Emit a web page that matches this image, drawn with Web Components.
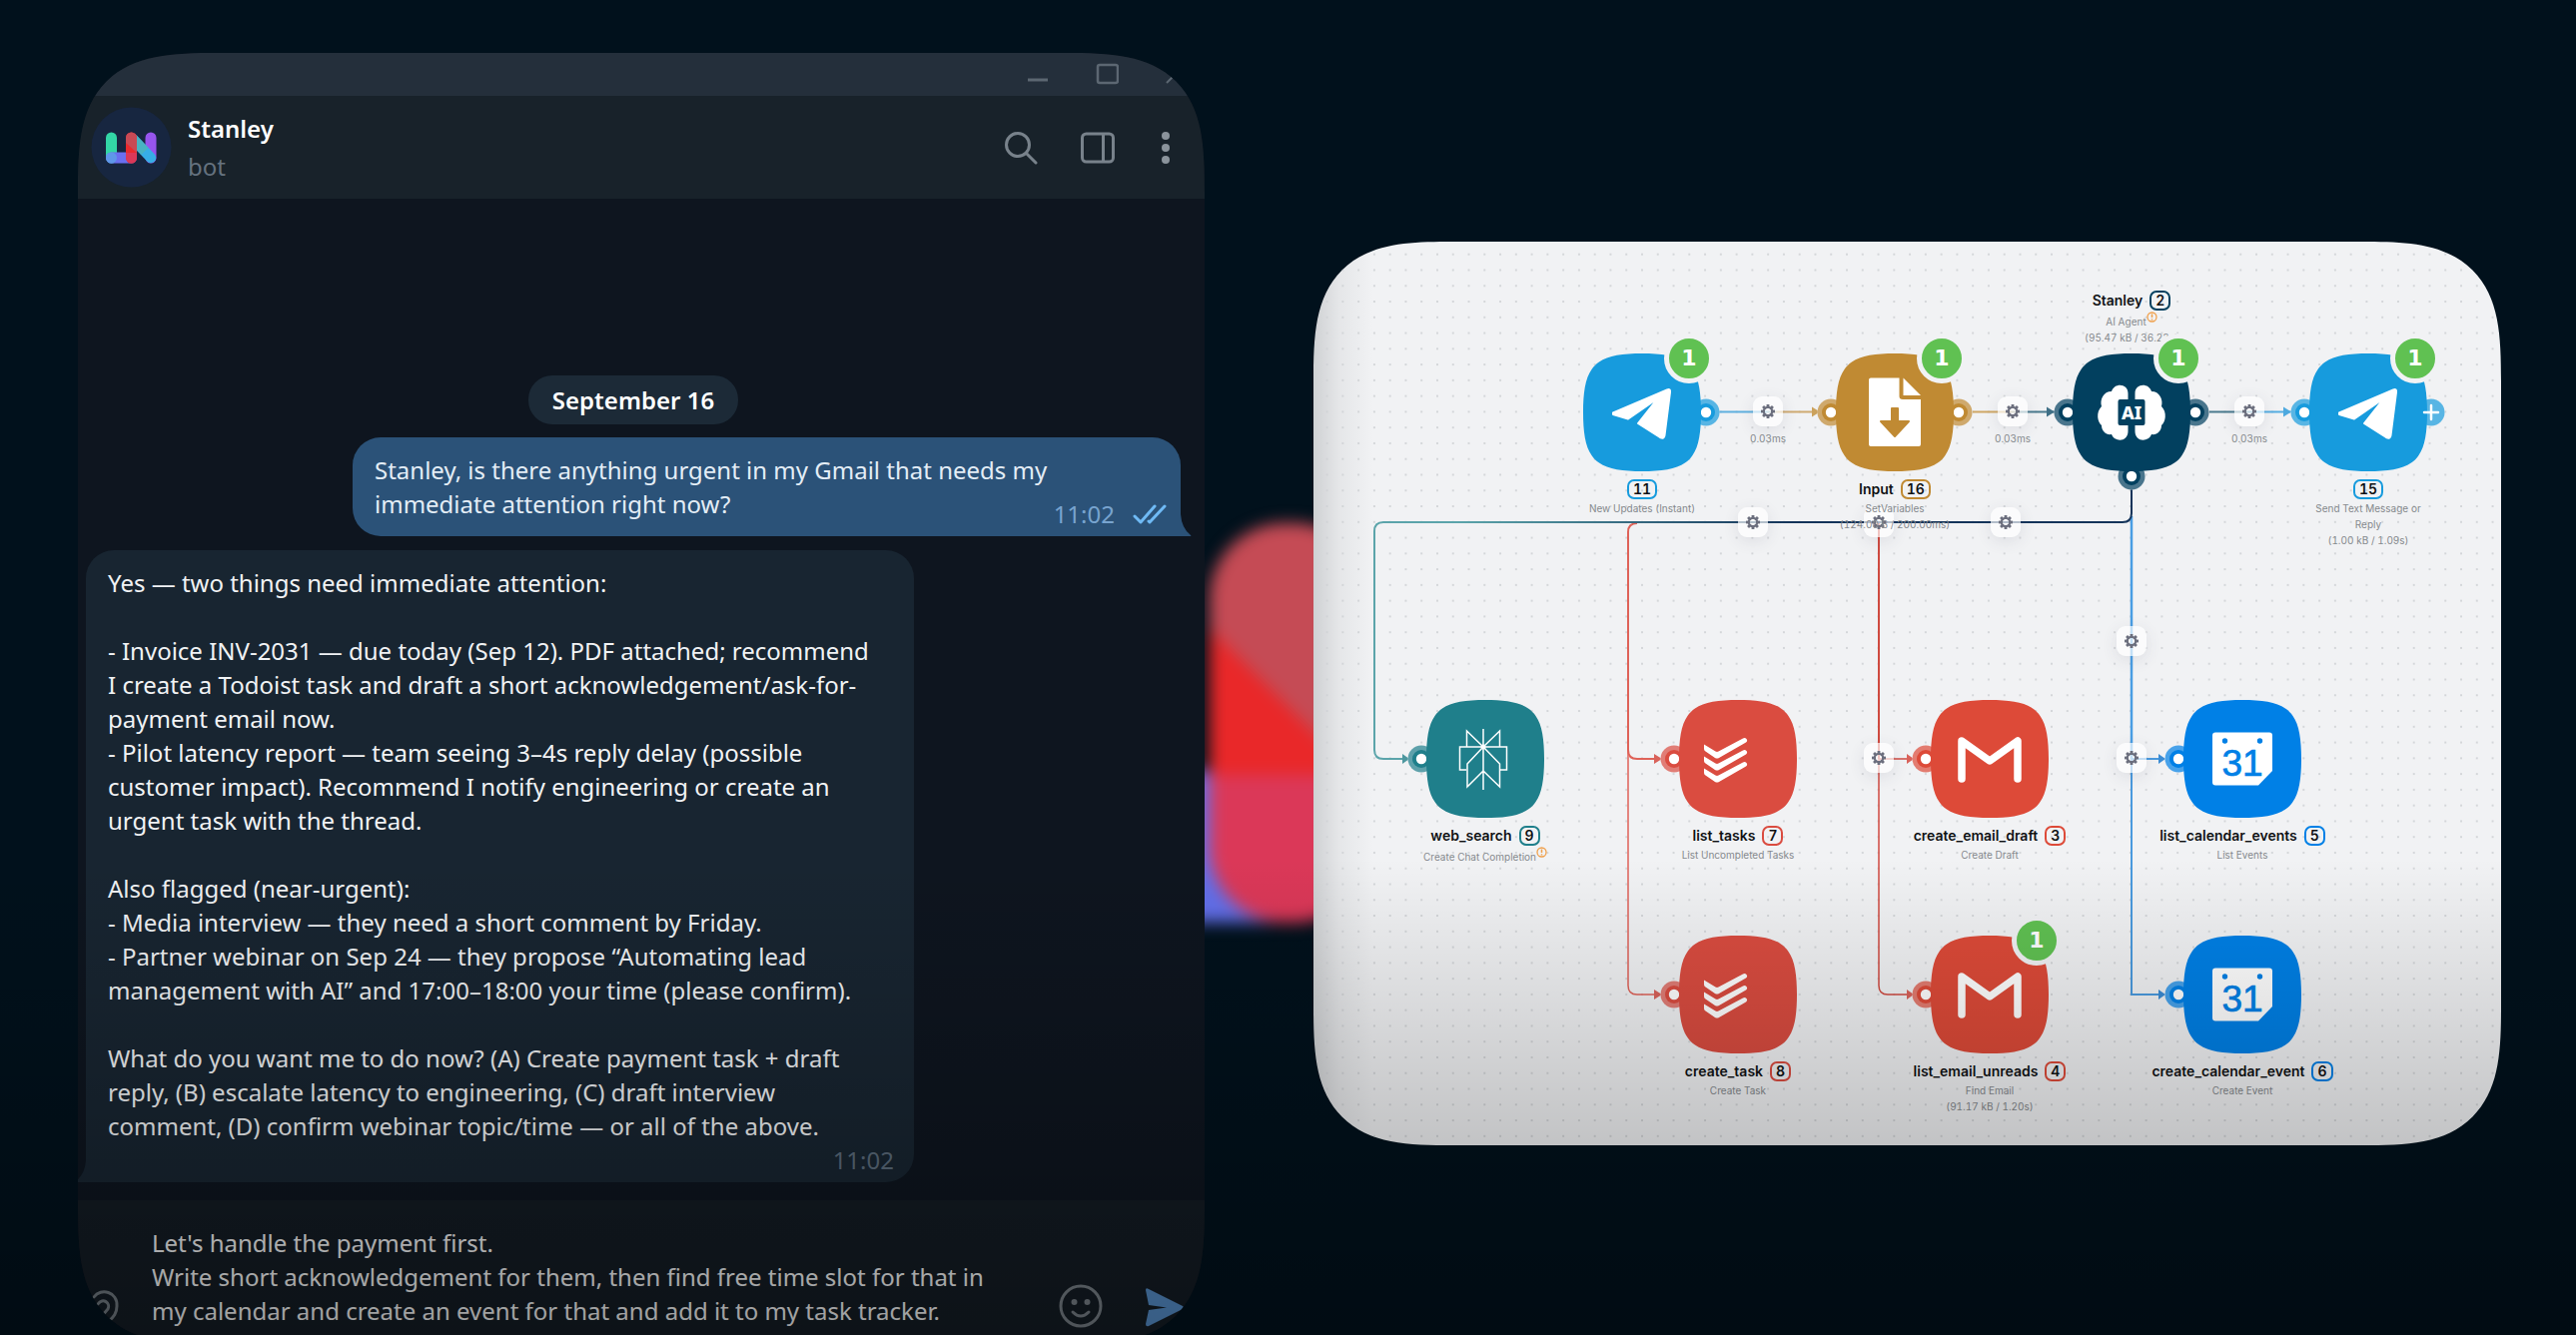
<!DOCTYPE html>
<html lang="en">
<head>
<meta charset="utf-8">
<title>Stanley</title>
<style>
  html, body { height: 100%; }
  body { margin: 0; overflow: hidden; background: #01111c; }
</style>
</head>
<body>
<assistant-stage>
  <chat-window slot="chat">
    <chat-header slot="header" name="Stanley" status="bot"></chat-header>
    <date-pill>September 16</date-pill>
    <chat-message kind="out" time="11:02">Stanley, is there anything urgent in my Gmail that needs my
immediate attention right now?</chat-message>
    <chat-message kind="in" time="11:02">Yes — two things need immediate attention:

- Invoice INV-2031 — due today (Sep 12). PDF attached; recommend
I create a Todoist task and draft a short acknowledgement/ask-for-
payment email now.
- Pilot latency report — team seeing 3–4s reply delay (possible
customer impact). Recommend I notify engineering or create an
urgent task with the thread.

Also flagged (near-urgent):
- Media interview — they need a short comment by Friday.
- Partner webinar on Sep 24 — they propose “Automating lead
management with AI” and 17:00–18:00 your time (please confirm).

What do you want me to do now? (A) Create payment task + draft
reply, (B) escalate latency to engineering, (C) draft interview
comment, (D) confirm webinar topic/time — or all of the above.</chat-message>
    <chat-composer slot="composer"></chat-composer>
  </chat-window>
  <flow-canvas slot="flow">
    <flow-gear x="455" y="170" time="0.03ms"></flow-gear>
    <flow-gear x="700" y="170" time="0.03ms"></flow-gear>
    <flow-gear x="937" y="170" time="0.03ms"></flow-gear>
    <flow-gear x="440" y="281"></flow-gear>
    <flow-gear x="566" y="281"></flow-gear>
    <flow-gear x="693" y="281"></flow-gear>
    <flow-gear x="819" y="400"></flow-gear>
    <flow-gear x="566" y="517"></flow-gear>
    <flow-gear x="819" y="517"></flow-gear>
    <flow-node x="329" y="171" icon="telegram" color="#179bdd" number="11" ports="right" badge="1"><span>New Updates (Instant)</span></flow-node>
    <flow-node x="582" y="171" icon="document" color="#c08a33" number="16" name="Input" ports="left right" badge="1"><span>SetVariables</span><span>(124.00 B / 200.00ms)</span></flow-node>
    <flow-node x="819" y="171" icon="brain" color="#02405f" number="2" name="Stanley" ports="left right bottom" badge="1" label="top"><span>AI Agent<warn-mark></warn-mark></span><span>(95.47 kB / 36.22s)</span></flow-node>
    <flow-node x="1056" y="171" icon="telegram" color="#179bdd" number="15" ports="left plus" badge="1"><span>Send Text Message or</span><span>Reply</span><span>(1.00 kB / 1.09s)</span></flow-node>
    <flow-node x="172" y="518" icon="perplexity" color="#1f7f8b" number="9" name="web_search" ports="left"><span>Create Chat Completion<warn-mark></warn-mark></span></flow-node>
    <flow-node x="425" y="518" icon="todoist" color="#da4c40" number="7" name="list_tasks" ports="left"><span>List Uncompleted Tasks</span></flow-node>
    <flow-node x="677" y="518" icon="gmail" color="#dd4a38" number="3" name="create_email_draft" ports="left"><span>Create Draft</span></flow-node>
    <flow-node x="930" y="518" icon="calendar" color="#0080e6" number="5" name="list_calendar_events" ports="left"><span>List Events</span></flow-node>
    <flow-node x="425" y="754" icon="todoist" color="#da4c40" number="8" name="create_task" ports="left"><span>Create Task</span></flow-node>
    <flow-node x="677" y="754" icon="gmail" color="#dd4a38" number="4" name="list_email_unreads" ports="left" badge="1"><span>Find Email</span><span>(91.17 kB / 1.20s)</span></flow-node>
    <flow-node x="930" y="754" icon="calendar" color="#0080e6" number="6" name="create_calendar_event" ports="left"><span>Create Event</span></flow-node>
  </flow-canvas>
</assistant-stage>

<script>
const define = (name, render) => customElements.define(name, class extends HTMLElement {
  connectedCallback() {
    if (this.shadowRoot) return;
    this.attachShadow({ mode: 'open' }).innerHTML = render(this);
  }
});

const SQUIRCLE = `border-radius: 104px;`;
const SQUIRCLE_SUPPORT = `@supports (corner-shape: superellipse(1.6)) {
  .panel { border-radius: 140px; corner-shape: superellipse(1.6); }
}`;

/* Whole stage: two panels over a dark backdrop with a blurred logo */
define('assistant-stage', () => `
<style>
  :host { display: grid; position: relative; box-sizing: border-box; height: 100vh; overflow: hidden;
    grid-template-columns: 1128fr 1189fr; column-gap: 109px; align-items: center; align-content: start;
    padding: 53px 75px 0 78px; background: #01111c;
    font-family: "Noto Sans", "Open Sans", sans-serif; }
  .glow { position: absolute; left: 1120px; top: 440px; width: 300px; height: 560px; filter: blur(8px); }
  .flow { margin-bottom: 10px; }
  .chat, .flow { position: relative; min-width: 0; }
  .shade { position: absolute; inset: 860px 0 0 0; pointer-events: none;
    background: linear-gradient(rgba(0,0,0,0), rgba(0,0,0,.32)); }
</style>
<svg class="glow" viewBox="1120 440 300 560" aria-hidden="true">
  <defs><clipPath id="bar"><rect x="1211" y="524" width="160" height="400" rx="76"/></clipPath></defs>
  <rect x="1000" y="772" width="330" height="152" rx="60" fill="#626fea"/>
  <g clip-path="url(#bar)">
    <rect x="1211" y="522" width="160" height="402" fill="#e92829"/>
    <path d="M1200 500H1372V790L1200 618Z" fill="#c54b55"/>
    <rect x="1211" y="776" width="160" height="150" fill="#db3858"/>
  </g>
</svg>
<div class="chat"><slot name="chat"></slot></div>
<div class="flow"><slot name="flow"></slot></div>
<div class="shade"></div>`);

define('chat-window', () => `
<style>
  :host { display: block; }
  .panel { display: grid; grid-template-rows: auto 1fr auto; overflow: hidden; background: #0e151f; ${SQUIRCLE} }
  ${SQUIRCLE_SUPPORT}
  main { display: flex; flex-direction: column; justify-content: flex-end; padding: 177px 24px 18px 8px; }
</style>
<section class="panel">
  <slot name="header"></slot>
  <main><slot></slot></main>
  <slot name="composer"></slot>
</section>`);

define('chat-header', el => `
<style>
  :host { display: block; }
  button { all: unset; display: block; }
  svg { display: block; }
  .titlebar { display: flex; justify-content: flex-end; align-items: center; gap: 46px; height: 43px; padding-right: 16px;
    box-sizing: border-box; background: #242f3b; }
  .bar { display: flex; align-items: center; height: 103px; padding: 0 30px 0 13px; background: #18222a; }
  .who { display: flex; flex-direction: column; flex: 1; margin-left: 16px; }
  .name { font-weight: 600; font-size: 24px; line-height: 38px; color: #fff; }
  .status { font-size: 24px; line-height: 38px; color: #65727f; }
  .tools { display: flex; align-items: center; gap: 42px; }
</style>
<div class="titlebar">
  <button aria-label="Minimize"><svg width="24" height="24" fill="none" stroke="#5c6772" stroke-width="3"><path d="M3 17H23"/></svg></button>
  <button aria-label="Maximize"><svg width="24" height="24" fill="none" stroke="#5c6772" stroke-width="2.500"><rect x="3" y="2" width="20" height="18" rx="2"/></svg></button>
  <button aria-label="Close"><svg width="24" height="24" fill="none" stroke="#5c6772" stroke-width="2"><path d="M2 20L20 2M2 2L20 20"/></svg></button>
</div>
<div class="bar">
  <svg width="81" height="81" viewBox="0 0 81 81" role="img" aria-label="Avatar">
    <circle cx="40.500" cy="40.500" r="40" fill="#172640"/>
    <rect x="15" y="25.500" width="11" height="31" rx="5.500" fill="#33d6a6"/>
    <rect x="15" y="45.500" width="31" height="11" rx="5.500" fill="#6a6ff0"/>
    <rect x="15" y="45.500" width="11" height="11" rx="5.500" fill="#5f97ea"/>
    <rect x="54.500" y="25.500" width="11" height="31" rx="5.500" fill="#9655ee"/>
    <path d="M42 32L60 51" stroke="#37aee6" stroke-width="10.500" stroke-linecap="round"/>
    <path d="M42 32L54 44.500" stroke="#48b3c2" stroke-width="10"/>
    <rect x="35" y="25.500" width="11" height="31" rx="5.500" fill="#e92a2e"/>
    <path d="M35 36V31A5.500 5.500 0 0 1 46 31V46Z" fill="#c84a55"/>
    <path d="M35 46H46V51A5.500 5.500 0 0 1 35 51Z" fill="#db3858"/>
  </svg>
  <div class="who"><span class="name">${el.getAttribute('name')}</span><span class="status">${el.getAttribute('status')}</span></div>
  <div class="tools">
    <button aria-label="Search"><svg width="34" height="34" fill="none" stroke="#78828b" stroke-width="3" stroke-linecap="round"><circle cx="13" cy="14" r="11.500"/><path d="M21.500 22.500L31 32"/></svg></button>
    <button aria-label="Side panel"><svg width="34" height="34" fill="none" stroke="#78828b" stroke-width="3"><rect x="1.500" y="3" width="31" height="28" rx="4"/><path d="M22.500 3V31"/></svg></button>
    <button aria-label="More"><svg width="18" height="34" fill="#8a939b"><circle cx="9" cy="5" r="4"/><circle cx="9" cy="17" r="4"/><circle cx="9" cy="29" r="4"/></svg></button>
  </div>
</div>`);

define('date-pill', () => `
<style>
  :host { display: block; align-self: center; margin-bottom: 13px; padding: 0 24px; border-radius: 24px; background: #1c2a37;
    font-weight: 600; font-size: 24px; line-height: 49px; color: #fff; }
</style><slot></slot>`);

define('chat-message', el => {
  const out = el.getAttribute('kind') === 'out';
  return `
<style>
  :host { display: block; width: 829px; align-self: ${out ? 'flex-end' : 'flex-start'}; ${out ? 'margin-bottom: 14px;' : ''} }
  article { position: relative; display: grid; padding: 16px 22px 5px; font-size: 24px; line-height: 34px;
    border-radius: ${out ? '28px 28px 0 28px' : '28px 28px 28px 0'};
    background: ${out ? '#2b5278' : '#182531'}; color: ${out ? '#e3edf6' : '#f0f2f4'}; }
  p { margin: 0; white-space: pre; ${out ? 'grid-area: 1 / 1; padding-bottom: 10px;' : ''} }
  .meta { display: flex; align-items: center; gap: 18px; justify-self: end; align-self: end; ${out ? 'grid-area: 1 / 1; margin-right: -8px;' : 'margin-right: -2px;'}
    color: ${out ? '#78a4cf' : '#5b6b7b'}; }
  .tail { position: absolute; bottom: 0; ${out ? 'left: 100%;' : 'right: 100%; transform: scaleX(-1);'} }
  svg { display: block; }
</style>
<article>
  <p><slot></slot></p>
  <div class="meta"><time>${el.getAttribute('time')}</time>${out ? `<svg width="34" height="20" fill="none" stroke="#6fbaf5" stroke-width="3" stroke-linecap="round" stroke-linejoin="round" role="img" aria-label="Read"><path d="M2 12L8 18L22 2M16 17L17 18L32 2"/></svg>` : ''}</div>
  <svg class="tail" width="11" height="28" fill="${out ? '#2b5278' : '#182531'}" aria-hidden="true"><path d="M0 0V28H10Q11 28 10 27Q1 20 0 6Z"/></svg>
</article>`;
});

define('chat-composer', () => `
<style>
  :host { display: block; }
  form { display: flex; align-items: flex-end; height: 144px; box-sizing: border-box; padding: 0 19px 0 8px; background: #131b23; }
  textarea { all: unset; flex: 1; height: 102px; margin: 0 0 16px 24px; white-space: pre; overflow: hidden;
    font: 24px/34px "Noto Sans", "Open Sans", sans-serif; color: #e8e9ea; }
  button { all: unset; display: block; margin-bottom: 16px; }
  button[aria-label="Send"] { margin-left: 43px; }
  svg { display: block; }
</style>
<form>
  <button type="button" aria-label="Attach"><svg width="42" height="42" fill="none" stroke="#6d757c" stroke-width="3" stroke-linecap="round"><path d="M8 11C15 1 32 6 31 20C31 27 28 31 22 36M12 18C17 11 25 17 22 23L16 30"/></svg></button>
  <textarea aria-label="Message">Let's handle the payment first.
Write short acknowledgement for them, then find free time slot for that in
my calendar and create an event for that and add it to my task tracker.</textarea>
  <button type="button" aria-label="Emoji"><svg width="44" height="44" fill="none" stroke="#737b82" stroke-width="3"><circle cx="22" cy="22" r="20"/><path d="M14 28Q22 36 30 28" stroke-linecap="round"/><g fill="#737b82" stroke="none"><circle cx="15.500" cy="18" r="3"/><circle cx="28.500" cy="18" r="3"/></g></svg></button>
  <button aria-label="Send"><svg width="40" height="42" fill="#5288c1"><path d="M0 4Q0 1 3 3L37 20Q39 21.500 37 23L3 40Q0 41 0 38L3 24L21 21.500L3 19Z"/></svg></button>
</form>`);

/* White canvas with dotted grid and connectors */
define('flow-canvas', () => `
<style>
  :host { display: block; font-family: Inter, sans-serif; font-variant-numeric: tabular-nums; }
  .panel { position: relative; overflow: hidden; background: linear-gradient(90deg, rgba(40,46,50,.17), rgba(40,46,50,.06) 26px, rgba(40,46,50,0) 60px), #f1f2f4; ${SQUIRCLE} }
  ${SQUIRCLE_SUPPORT}
  .scene { position: relative; width: 1189px; height: 905px; margin: 0 auto; }
  .scene > svg { display: block; }
</style>
<section class="panel"><div class="scene">
  <svg width="1189" height="905" fill="none" stroke-width="2" aria-hidden="true">
    <defs>
      <pattern id="dots" x="5.700" y="4.800" width="15.770" height="15.770" patternUnits="userSpaceOnUse"><circle cx="7.900" cy="7.900" r="1.100" fill="#cfd2d5"/></pattern>
      <linearGradient id="a" gradientUnits="userSpaceOnUse" x1="406" x2="506"><stop offset=".45" stop-color="#5fb0df"/><stop offset=".6" stop-color="#cfab72"/></linearGradient>
      <linearGradient id="b" gradientUnits="userSpaceOnUse" x1="660" x2="742"><stop offset=".4" stop-color="#cfa765"/><stop offset=".6" stop-color="#4a7a8e"/></linearGradient>
      <linearGradient id="c" gradientUnits="userSpaceOnUse" x1="897" x2="978"><stop offset=".4" stop-color="#4a7a8e"/><stop offset=".6" stop-color="#56aee2"/></linearGradient>
      <linearGradient id="d" gradientUnits="userSpaceOnUse" x1="61" x2="480"><stop offset=".2" stop-color="#5ba4aa"/><stop offset="1" stop-color="#14345a"/></linearGradient>
    </defs>
    <rect width="1189" height="905" fill="url(#dots)"/>
    <path d="M406 170.500H506.100V171" stroke="url(#a)"/>
    <path d="M660 170.500H742.100V171" stroke="url(#b)"/>
    <path d="M897 170.500H978.100V171" stroke="url(#c)"/>
    <g stroke="#df6258"><path d="M324 282Q315 282 315 291V509Q315 518 324 518H344"/><path d="M315 509V745Q315 754 324 754H344" stroke-width="1.500"/></g>
    <g stroke="#cf4a40"><path d="M566 281V518"/><path d="M566 518H596M566 510V745Q566 754 575 754H596" stroke-width="1.500"/></g>
    <path d="M819 275V518" stroke="#4a9ee4" stroke-width="2.500"/><path d="M819 518V754H850M819 518H850" stroke="#4a9ade"/>
    <path d="M819 248V272Q819 281 810 281H400" stroke="#14345a"/>
    <path d="M480 281H70Q61 281 61 290V509Q61 518 70 518H92" stroke="url(#d)"/>
    <path d="M499 165.500L507 170.500L499 175.500Z" fill="#cba15b"/>
    <path d="M734 165.500L742 170.500L734 175.500Z" fill="#3f6f86"/>
    <path d="M971 165.500L979 170.500L971 175.500Z" fill="#4da9df"/>
    <path d="M89 513L96 518L89 523Z" fill="#4d979f"/>
    <path d="M341 513L349 518L341 523ZM341 749L349 754L341 759ZM594 513L601 518L594 523ZM594 749L601 754L594 759Z" fill="#d9625a"/>
    <path d="M846 513L853 518L846 523ZM846 749L853 754L846 759Z" fill="#3b8cd4"/>
  </svg>
  <slot></slot>
</div></section>`);

define('warn-mark', () => `
<style>:host { display: inline-block; height: 11px; vertical-align: 3px; } svg { display: block; }</style>
<svg width="11" height="11" fill="none" stroke="#f0a04b" role="img" aria-label="Warning"><circle cx="5.500" cy="5.500" r="4.500" stroke-width="1.300"/><path d="M5.500 2.500V6M5.500 7.200V8.600" stroke-width="1.500"/></svg>`);

define('flow-gear', el => {
  let teeth = '';
  for (let i = 0; i < 8; i++) teeth += `<rect x="-1.400" y="-7" width="2.800" height="4" transform="rotate(${i * 45})" fill="#6c6f7e"/>`;
  return `
<style>
  :host { position: absolute; left: ${el.getAttribute('x') - 30}px; top: ${el.getAttribute('y') - 15}px; width: 60px;
    display: flex; flex-direction: column; align-items: center; gap: 4px; }
  button { all: unset; width: 30px; height: 30px; border-radius: 9px; background: rgba(255,255,255,.68); box-shadow: 0 4px 16px rgba(60,60,90,.11); }
  span { font-size: 10px; line-height: 16px; color: #85898d; }
  svg { display: block; }
</style>
<button aria-label="Route settings"><svg width="30" height="30" viewBox="-15 -15 30 30">${teeth}<circle r="4.300" fill="none" stroke="#6c6f7e" stroke-width="2"/></svg></button>
${el.hasAttribute('time') ? `<span>${el.getAttribute('time')}</span>` : ''}`;
});

const ICONS = {
  telegram: () => `<path fill="#fff" stroke="#fff" stroke-width="2" stroke-linejoin="round" d="M-29 .5L25 -22.500Q28.500 -24 28 -20L22.500 23Q22 27 18 25L-4 11L13 -10.500Q14.500 -13 12 -11.500L-14 6.500L-29 2Z"/>`,
  document: c => `<path fill="#fff" d="M-24 -34.500H4.500V-16Q4.500 -13 8 -13H26V32Q26 34 24 34H-24Q-26 34 -26 32V-32.500Q-26 -34.500 -24 -34.500Z"/><path fill="#fff" d="M8.500 -34.500L26 -17H8.500Z"/><path fill="${c}" stroke="${c}" stroke-width="2" stroke-linejoin="round" d="M-3 -4H3V9H14L0 24L-14 9H-3Z"/>`,
  brain: c => {
    const half = `<path d="M-3.500 -19C-3.500 -29 -17 -30 -20 -21C-28 -21 -32 -13 -30 -6C-36 0 -34 10 -30 13C-30 19 -25 23 -20 22C-17 30 -3.500 30 -3.500 19Z"/>`;
    return `<g fill="#fff">${half}<g transform="scale(-1 1)">${half}</g></g><rect x="-13.500" y="-13" width="27" height="26" rx="2" fill="${c}"/><text y="7" text-anchor="middle" font-family="Noto Sans, sans-serif" font-weight="800" font-size="18" fill="#fff">AI</text>`;
  },
  perplexity: () => `<path fill="none" stroke="#fff" stroke-width="1.500" d="M-2 -30V31M-18.500 -12V-28L-2 -12L14.500 -28V-12M-19 11H-25.500V-12H21.500V11H15M-2 -12L-18 5V28L-2 12L14.500 28V5L-2 -12"/><circle cx="-2" cy="-12" r="2.500" fill="#fff"/>`,
  todoist: () => [0, 12, 24].map(d => `<path transform="translate(0 ${d})" fill="#fff" d="M-34 -14.500L-22.500 -7.500Q-21 -6.600 -19.500 -7.500L5 -20.500Q7 -21.500 8.500 -20Q10 -18 8 -16.500L-19 -1Q-21 0 -23 -1L-32.500 -7.500Q-34 -8.500 -34 -10Z"/>`).join(''),
  gmail: () => `<path fill="none" stroke="#fff" stroke-width="7.500" stroke-linecap="round" stroke-linejoin="round" d="M-28 20V-18L0 2L28 -18V20"/>`,
  calendar: c => `<path fill="#fff" d="M-27 -26.500H27Q30 -26.500 30 -23.500V12L16 26.500H-27Q-30 26.500 -30 23.500V-23.500Q-30 -26.500 -27 -26.500Z"/><circle cx="-17.500" cy="-18" r="2.700" fill="${c}"/><circle cx="17.500" cy="-18" r="2.700" fill="${c}"/><text y="17" text-anchor="middle" font-family="Liberation Sans, sans-serif" font-size="37" fill="${c}" stroke="${c}" stroke-width=".7">31</text>`
};
const PORTS = { left: [-64, 0], right: [64, 0], bottom: [0, 64], plus: [63, 0] };

define('flow-node', el => {
  const c = el.getAttribute('color'), name = el.getAttribute('name'), top = el.getAttribute('label') === 'top';
  const ports = el.getAttribute('ports').split(' ').map(p => {
    const [x, y] = PORTS[p];
    return `<g transform="translate(${x} ${y})"><circle r="13.500" fill="#f1f2f4"/><circle r="13.500" fill="${c}" opacity=".7"/>` +
      (p === 'plus' ? '' : `<circle r="9" fill="${c}"/><circle r="5.200" fill="#fff"/>`) + `</g>`;
  }).join('');
  const q = `C-59 -19 -57 -34 -50.500 -43C-48.500 -46 -46 -48.500 -43 -50.500C-34 -57 -19 -59 0 -59C19 -59 34 -57 43 -50.500C46 -48.500 48.500 -46 50.500 -43C57 -34 59 -19 59 0C59 19 57 34 50.500 43C48.500 46 46 48.500 43 50.500C34 57 19 59 0 59C-19 59 -34 57 -43 50.500C-46 48.500 -48.500 46 -50.500 43C-57 34 -59 19 -59 0Z`;
  return `
<style>
  :host { position: absolute; left: ${el.getAttribute('x') - 100}px; top: ${el.getAttribute('y') - 67}px; width: 200px;
    display: flex; flex-direction: column; align-items: center; color: #85898d; }
  svg { display: block; overflow: visible; }
  .label { display: flex; flex-direction: column; align-items: center; gap: 1px; }
  .label.top { position: absolute; bottom: 100%; }
  .title { display: flex; align-items: center; gap: 7px; font-weight: 600; font-size: 14px; line-height: 20px; color: #101214; }
  .num { box-sizing: border-box; height: 20px; min-width: 20px; padding: 0 4px; border: 2px solid ${c}; border-radius: 7px; line-height: 16px; text-align: center; }
  .sub { display: flex; flex-direction: column; align-items: center; font-size: 10px; line-height: 16px; white-space: nowrap; }
  .badge { position: absolute; left: 122px; top: -12px; width: 40px; height: 40px; border: 5px solid #f1f2f4; border-radius: 50%;
    background: #60c152; color: #fff; text-align: center; font: 700 22px/40px "DejaVu Sans", sans-serif; }
</style>
<svg width="200" height="134" viewBox="-100 -67 200 134" aria-hidden="true">${ports}<path d="M-59 0${q}" fill="${c}"/>${ICONS[el.getAttribute('icon')](c)}${
  el.getAttribute('ports').includes('plus') ? '<path d="M56 0H70M63 -7V7" stroke="#fff" stroke-width="2.500" stroke-linecap="round"/>' : ''}</svg>
<div class="label ${top ? 'top' : ''}">
  <div class="title">${name ? `<span>${name}</span>` : ''}<span class="num">${el.getAttribute('number')}</span></div>
  <div class="sub"><slot></slot></div>
</div>
${el.hasAttribute('badge') ? `<span class="badge">${el.getAttribute('badge')}</span>` : ''}`;
});
</script>
</body>
</html>
